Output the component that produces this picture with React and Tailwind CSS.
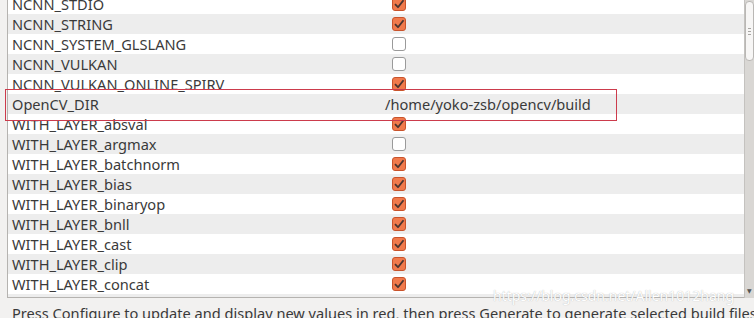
const rows = [
  { name: 'NCNN_STDIO', checked: true },
  { name: 'NCNN_STRING', checked: true },
  { name: 'NCNN_SYSTEM_GLSLANG', checked: false },
  { name: 'NCNN_VULKAN', checked: false },
  { name: 'NCNN_VULKAN_ONLINE_SPIRV', checked: true },
  { name: 'OpenCV_DIR', value: '/home/yoko-zsb/opencv/build' },
  { name: 'WITH_LAYER_absval', checked: true },
  { name: 'WITH_LAYER_argmax', checked: false },
  { name: 'WITH_LAYER_batchnorm', checked: true },
  { name: 'WITH_LAYER_bias', checked: true },
  { name: 'WITH_LAYER_binaryop', checked: true },
  { name: 'WITH_LAYER_bnll', checked: true },
  { name: 'WITH_LAYER_cast', checked: true },
  { name: 'WITH_LAYER_clip', checked: true },
  { name: 'WITH_LAYER_concat', checked: true },
  { name: 'WITH_LAYER_convolution', checked: true },
];

function CheckBox({ checked }) {
  if (!checked) {
    return <div className="h-[14px] w-[14px] rounded-[3px] border border-[#9a9a9a] bg-white" />;
  }
  return (
    <svg width="14" height="14" viewBox="0 0 14 14">
      <rect x="0.5" y="0.5" width="13" height="13" rx="2.5" fill="#f07a4c" stroke="#c9532b" />
      <path d="M3 7.2 L6 10.2 L11.5 3.2" fill="none" stroke="#4b3530" strokeWidth="1.8" strokeLinejoin="round" />
    </svg>
  );
}

export default function App() {
  return (
    <div className="relative h-[318px] w-[754px] overflow-hidden bg-[#f2f1f0] text-[14.6px] text-[#3a3a3a]" style={{ fontFamily: '"Noto Sans", "DejaVu Sans", sans-serif' }}>
      <div className="flex h-[298px]">
        <div className="ml-[7px] flex-1 overflow-hidden border-b border-l border-[#b5b3b0] bg-white">
          <div className="mt-[-6px]">
            {rows.map((r, i) => (
              <div key={r.name} className={`flex h-[20px] items-center ${i % 2 === 1 ? 'bg-[#ededed]' : 'bg-white'}`}>
                <div className="w-[377px] shrink-0 pl-[4px] leading-none">{r.name}</div>
                {r.value ? (
                  <div className="leading-none">{r.value}</div>
                ) : (
                  <div className="pl-[7px]"><CheckBox checked={r.checked} /></div>
                )}
              </div>
            ))}
          </div>
        </div>
        <div className="relative w-[10px] bg-[#d9d7d4] border-l border-[#c4c2bf]">
          <div className="mt-[1px] flex h-[60px] w-[9px] flex-col items-center justify-center gap-[2px] rounded-[4px] border border-[#b9b7b4] bg-[#f7f6f5]">
            <div className="h-px w-[3px] bg-[#a8a6a3]" />
            <div className="h-px w-[3px] bg-[#a8a6a3]" />
            <div className="h-px w-[3px] bg-[#a8a6a3]" />
          </div>
          <div className="absolute bottom-[4px] left-[2px] text-[6px] leading-none text-[#555]">▼</div>
        </div>
      </div>
      <div className="absolute left-[493px] top-[289px] text-[14px] leading-none text-white" style={{ textShadow: '0 0 1px #aaa' }}>
        https://blog.csdn.net/Allen1012hang
      </div>
      <div className="whitespace-nowrap pl-[12px] pt-[8px] leading-none">
        Press Configure to update and display new values in red, then press Generate to generate selected build files.
      </div>
      <div className="absolute left-[5px] top-[89px] h-[32px] w-[612px] border border-[#cc3b4c]" />
    </div>
  );
}
